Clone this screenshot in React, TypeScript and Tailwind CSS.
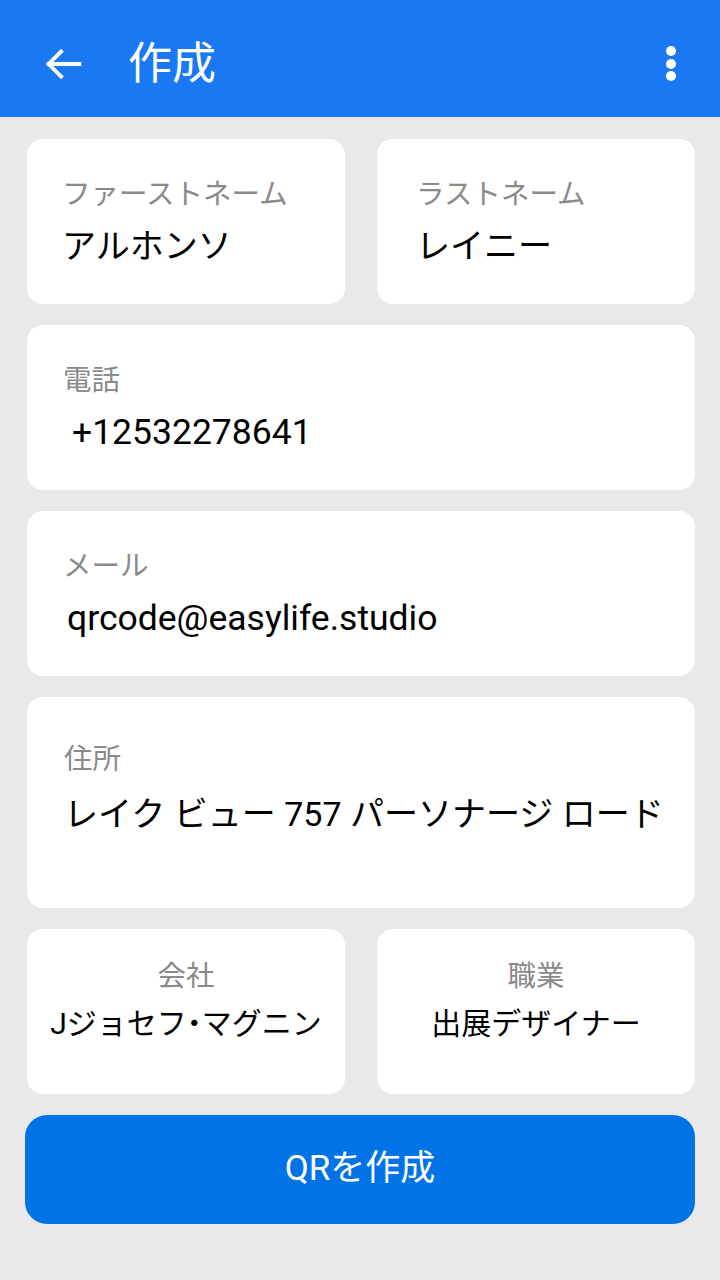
const font = "font-['Roboto','Noto_Sans_CJK_JP',sans-serif]";

function Field({
  label,
  value,
  className = "",
}: {
  label: string;
  value: string;
  className?: string;
}) {
  return (
    <div className={`h-[165px] rounded-[16px] bg-white pt-[36px] ${className}`}>
      <div className="text-[28.5px] leading-[40px] text-[#8a8a8a]">{label}</div>
      <div className="mt-[9px] text-[34px] leading-[44px] text-black">{value}</div>
    </div>
  );
}

export default function App() {
  return (
    <div className={`flex min-h-[1280px] w-[720px] flex-col bg-[#e9e9e9] ${font}`}>
      <header className="flex h-[117px] items-center bg-[#1a79f2] pl-[40px] pr-[44px] pt-[10px] text-white">
        <svg width="46" height="46" viewBox="0 0 24 24" fill="none">
          <path
            d="M20.5 12H4.5M11 5.5L4.5 12l6.5 6.5"
            stroke="white"
            strokeWidth="2"
            strokeLinecap="square"
          />
        </svg>
        <h1 className="ml-[42px] text-[44px] font-normal leading-none">作成</h1>
        <div className="ml-auto flex flex-col items-center gap-[2.5px]">
          <span className="h-[10px] w-[10px] rounded-full bg-white" />
          <span className="h-[10px] w-[10px] rounded-full bg-white" />
          <span className="h-[10px] w-[10px] rounded-full bg-white" />
        </div>
      </header>

      <main className="flex flex-col gap-[21px] pl-[27px] pr-[25px] pt-[22px]">
        <div className="grid grid-cols-2 gap-[32px]">
          <Field label="ファーストネーム" value="アルホンソ" className="pl-[35px]" />
          <Field label="ラストネーム" value="レイニー" className="pl-[39px]" />
        </div>

        <div className="h-[165px] rounded-[16px] bg-white pl-[36px] pt-[36px]">
          <div className="text-[28.5px] leading-[40px] text-[#8a8a8a]">電話</div>
          <div className="ml-[9px] mt-[9px] text-[35.5px] leading-[44px] text-black">+12532278641</div>
        </div>

        <div className="h-[165px] rounded-[16px] bg-white pl-[36px] pt-[36px]">
          <div className="text-[28.5px] leading-[40px] text-[#8a8a8a]">メール</div>
          <div className="ml-[4px] mt-[9px] text-[35.5px] leading-[44px] text-black">
            qrcode@easylife.studio
          </div>
        </div>

        <div className="h-[211px] rounded-[16px] bg-white pl-[37px] pt-[43px]">
          <div className="text-[28.5px] leading-[40px] text-[#8a8a8a]">住所</div>
          <div className="mt-[10px] text-[34px] leading-[48px] text-black">
            レイク ビュー 757 パーソナージ ロード
          </div>
        </div>

        <div className="grid grid-cols-2 gap-[32px] text-center">
          <div className="h-[165px] rounded-[16px] bg-white pt-[28px]">
            <div className="text-[28.5px] leading-[40px] text-[#8a8a8a]">会社</div>
            <div className="mt-[5px] text-[30px] leading-[44px] text-black">
              Jジョセフ<span className="[font-feature-settings:'halt']">・</span>マグニン
            </div>
          </div>
          <div className="h-[165px] rounded-[16px] bg-white pt-[28px]">
            <div className="text-[28.5px] leading-[40px] text-[#8a8a8a]">職業</div>
            <div className="mt-[5px] text-[30px] leading-[44px] text-black">出展デザイナー</div>
          </div>
        </div>

        <button className="-ml-[2px] h-[109px] rounded-[22px] bg-[#0073e6] text-[35px] text-white">
          QRを作成
        </button>
      </main>
    </div>
  );
}
